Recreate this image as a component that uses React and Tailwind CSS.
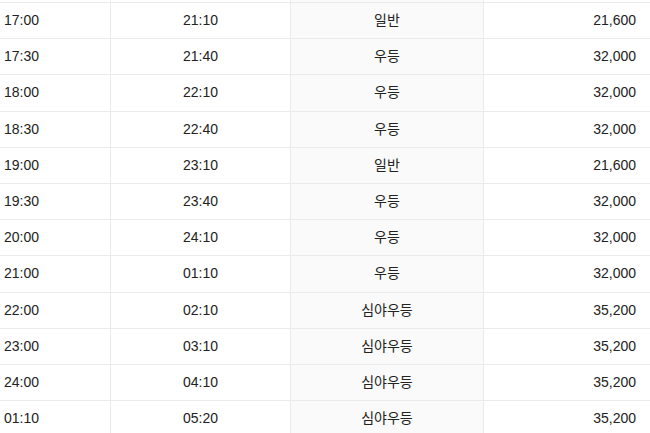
const rows = [
  ["17:00", "21:10", "일반", "21,600"],
  ["17:30", "21:40", "우등", "32,000"],
  ["18:00", "22:10", "우등", "32,000"],
  ["18:30", "22:40", "우등", "32,000"],
  ["19:00", "23:10", "일반", "21,600"],
  ["19:30", "23:40", "우등", "32,000"],
  ["20:00", "24:10", "우등", "32,000"],
  ["21:00", "01:10", "우등", "32,000"],
  ["22:00", "02:10", "심야우등", "35,200"],
  ["23:00", "03:10", "심야우등", "35,200"],
  ["24:00", "04:10", "심야우등", "35,200"],
  ["01:10", "05:20", "심야우등", "35,200"],
];

const Row = ({ cells, className }) => (
  <div className={`grid grid-cols-[110px_180px_193px_1fr] border-b border-[#ebebeb] ${className}`}>
    <div className="flex items-center pl-[4px]">{cells[0]}</div>
    <div className="flex items-center justify-center border-l border-[#ebebeb]">{cells[1]}</div>
    <div className="flex items-center justify-center border-l border-[#ebebeb] bg-[#fafafa]">{cells[2]}</div>
    <div className="flex items-center justify-end pr-[14px] border-l border-[#ebebeb]">{cells[3]}</div>
  </div>
);

export default function App() {
  return (
    <div
      className="w-[650px] h-[433px] overflow-hidden bg-white text-[14px] text-[#222]"
      style={{ fontFamily: '"Liberation Sans", "Noto Sans CJK KR", sans-serif' }}
    >
      {/* 위에서 잘린 이전 행 */}
      <Row cells={["", "", "", ""]} className="h-[3px]" />
      {rows.map((r) => (
        <Row key={r[0]} cells={r} className="h-[36.2px]" />
      ))}
    </div>
  );
}
